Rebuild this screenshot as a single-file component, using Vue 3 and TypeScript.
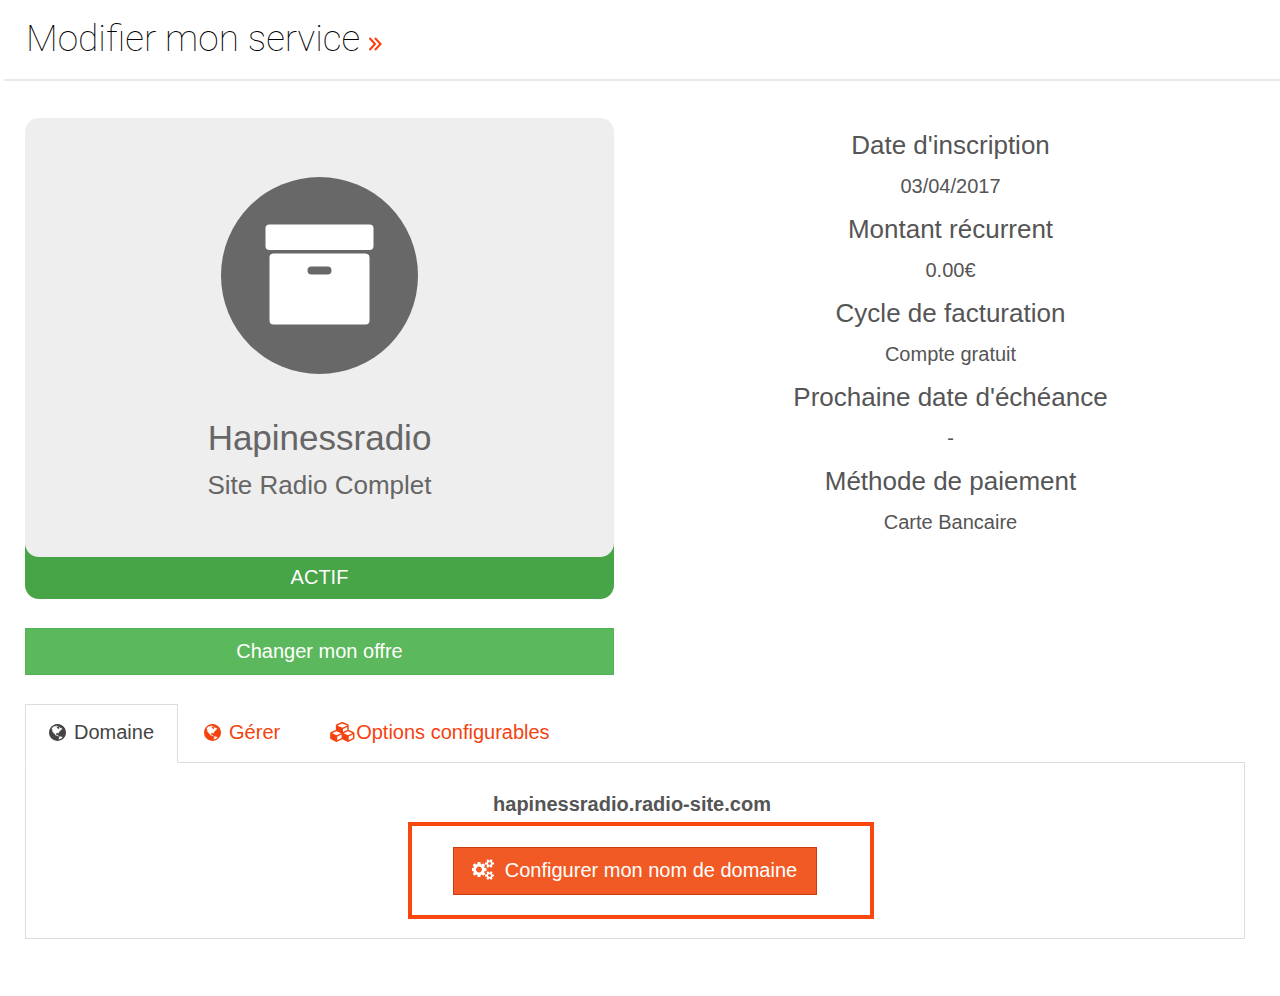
<script setup lang="ts">
import { ref } from 'vue'

interface Detail {
  label: string
  value: string
}

interface Tab {
  id: string
  label: string
  icon: 'globe' | 'cubes'
}

const details: Detail[] = [
  { label: "Date d'inscription", value: '03/04/2017' },
  { label: 'Montant récurrent', value: '0.00€' },
  { label: 'Cycle de facturation', value: 'Compte gratuit' },
  { label: "Prochaine date d'échéance", value: '-' },
  { label: 'Méthode de paiement', value: 'Carte Bancaire' },
]

const tabs: Tab[] = [
  { id: 'domaine', label: 'Domaine', icon: 'globe' },
  { id: 'gerer', label: 'Gérer', icon: 'globe' },
  { id: 'options', label: 'Options configurables', icon: 'cubes' },
]

const active = ref('domaine')

const icons = {
  globe: {
    box: '128 128 1536 1536',
    path: 'M896 128q209 0 385.500 103t279.500 279.500 103 385.500-103 385.500-279.500 279.500-385.500 103-385.500-103-279.500-279.500-103-385.500 103-385.500 279.500-279.500 385.500-103zm274 521q-2 1-9.500 9.500t-13.500 9.500q2 0 4.500-5t5-11 3.500-7q6-7 22-15 14-6 52-12 34-8 51 11-2-2 9.500-13t14.500-12q3-2 15-4.500t15-7.500l2-22q-12 1-17.500-7t-6.500-21q0 2-6 8 0-7-4.500-8t-11.500 1-9 1q-10-3-15-7.500t-8-16.500-4-15q-2-5-9.500-11t-9.500-10q-1-2-2.500-5.500t-3-6.500-4-5.500-5.500-2.500-7 5-7.500 10-4.500 5q-3-2-6-1.500t-4.500 1-4.500 3-5 3.500q-3 2-8.500 3t-8.500 2q15-5-1-11-10-4-16-3 9-4 7.500-12t-8.500-14h5q-1-4-8.500-8.500t-17.500-8.500-13-6q-8-5-34-9.500t-33-.5q-5 6-4.500 10.500t4 14 3.500 12.500q1 6-5.500 13t-6.500 12q0 7 14 15.500t10 21.500q-3 8-16 16t-16 12q-5 8-1.500 18.500t10.500 16.500q2 2 1.500 4t-3.500 4.500-5.500 4-6.500 3.500l-3 2q-11 5-20.500-6t-13.500-26q-7-25-16-30-23-8-29 1-5-13-41-26-25-9-58-4 6-1 0-15-7-15-19-12 3-6 4-17.500t1-13.500q3-13 12-23 1-1 7-8.500t9.500-13.500.500-6q35 4 50-11 5-5 11.500-17t10.500-17q9-6 14-5.500t14.500 5.500 14.500 5q14 1 15.500-11t-7.500-20q12 1 3-17-4-7-8-9-12-4-27 5-8 4 2 8-1-1-9.500 10.500t-16.500 17.500-16-5q-1-1-5.500-13.500t-9.500-13.500q-8 0-16 15 3-8-11-15t-24-8q19-12-8-27-7-4-20.500-5t-19.500 4q-5 7-5.500 11.500t5 8 10.500 5.500 11.500 4 8.500 3q14 10 8 14-2 1-8.500 3.500t-11.500 4.500-6 4q-3 4 0 14t-2 14q-5-5-9-17.500t-7-16.500q7 9-25 6l-10-1q-4 0-16 2t-20.500 1-13.500-8q-4-8 0-20 1-4 4-2-4-3-11-9.500t-10-8.500q-46 15-94 41 6 1 12-1 5-2 13-6.500t10-5.500q34-14 42-7l5-5q14 16 20 25-7-4-30-1-20 6-22 12 7 12 5 18-4-3-11.500-10t-14.500-11-15-5q-16 0-22 1-146 80-235 222 7 7 12 8 4 1 5 9t2.500 11 11.500-3q9 8 3 19 1-1 44 27 19 17 21 21 3 11-10 18-1-2-9-9t-9-4q-3 5 .5 18.500t10.500 12.500q-7 0-9.500 16t-2.500 35.500-1 23.500l2 1q-3 12 5.500 34.500t21.500 19.500q-13 3 20 43 6 8 8 9 3 2 12 7.500t15 10 10 10.500q4 5 10 22.500t14 23.500q-2 6 9.500 20t10.500 23q-1 0-2.500 1t-2.500 1q3 7 15.500 14t15.500 13q1 3 2 10t3 11 8 2q2-20-24-62-15-25-17-29-3-5-5.500-15.500t-4.500-14.500q2 0 6 1.500t8.500 3.500 7.500 4 2 3q-3 7 2 17.500t12 18.500 17 19 12 13q6 6 14 19.500t0 13.500q9 0 20 10t17 20q5 8 8 26t5 24q2 7 8.500 13.500t12.500 9.500l16 8 13 7q5 2 18.500 10.500t21.500 11.500q10 4 16 4t14.500-2.500 13.500-3.500q15-2 29 15t21 21q36 19 55 11-2 1 .5 7.500t8 15.500 9 14.500 5.500 8.500q5 6 18 15t18 15q6-4 7-9-3 8 7 20t18 10q14-3 14-32-31 15-49-18 0-1-2.500-5.500t-4-8.500-2.500-8.500 0-7.500 5-3q9 0 10-3.500t-2-12.500-4-13q-1-8-11-20t-12-15q-5 9-16 8t-16-9q0 1-1.500 5.500t-1.500 6.500q-13 0-15-1 1-3 2.500-17.500t3.500-22.500q1-4 5.500-12t7.500-14.500 4-12.500-4.500-9.500-17.500-2.500q-19 1-26 20-1 3-3 10.500t-5 11.500-9 7q-7 3-24 2t-24-5q-13-8-22.500-29t-9.500-37q0-10 2.500-26.500t3-25-5.500-24.500q3-2 9-9.500t10-10.500q2-1 4.500-1.500t4.500 0 4-1.500 3-6q-1-1-4-3-3-3-4-3 7 3 28.500-1.500t27.500 1.500q15 11 22-2 0-1-2.500-9.500t-.5-13.500q5 27 29 9 3 3 15.500 5t17.500 5q3 2 7 5.500t5.500 4.500 5-.5 8.500-6.500q10 14 12 24 11 40 19 44 7 3 11 2t4.500-9.500 0-14-1.500-12.500l-1-8v-18l-1-8q-15-3-18.500-12t1.500-18.500 15-18.500q1-1 8-3.500t15.500-6.500 12.500-8q21-19 15-35 7 0 11-9-1 0-5-3t-7.500-5-4.500-2q9-5 2-16 5-3 7.500-11t7.500-10q9 12 21 2 7-8 1-16 5-7 20.500-10.500t18.500-9.500q7 2 8-2t1-12 3-12q4-5 15-9t13-5l17-11q3-4 0-4 18 2 31-11 10-11-6-20 3-6-3-9.500t-15-5.500q3-1 11.500-.5t10.500-1.500q15-10-7-16-17-5-43 12zm-163 877q206-36 351-189-3-3-12.500-4.500t-12.500-3.500q-18-7-24-8 1-7-2.500-13t-8-9-12.500-8-11-7q-2-2-7-6t-7-5.500-7.500-4.500-8.500-2-10 1l-3 1q-3 1-5.500 2.500t-5.500 3-4 3 0 2.500q-21-17-36-22-5-1-11-5.500t-10.500-7-10-1.500-11.500 7q-5 5-6 15t-2 13q-7-5 0-17.500t2-18.500q-3-6-10.500-4.500t-12 4.500-11.500 8.500-9 6.500-8.500 5.500-8.500 7.500q-3 4-6 12t-5 11q-2-4-11.500-6.500t-9.500-5.500q2 10 4 35t5 38q7 31-12 48-27 25-29 40-4 22 12 26 0 7-8 20.500t-7 21.500q0 6 2 16z',
  },
  cubes: {
    box: '0 0 2304 1792',
    path: 'M640 1632l384-192v-314l-384 164v342zm-64-454l404-173-404-173-404 173zm1088 454l384-192v-314l-384 164v342zm-64-454l404-173-404-173-404 173zm-448-293l384-165v-266l-384 164v267zm-64-379l441-189-441-189-441 189zm1088 518v416q0 36-19 67t-52 47l-448 224q-25 14-57 14t-57-14l-448-224q-4-2-7-4-2 2-7 4l-448 224q-25 14-57 14t-57-14l-448-224q-33-16-52-47t-19-67v-416q0-38 21.500-70t56.500-48l434-186v-400q0-38 21.500-70t56.500-48l448-192q23-10 50-10t50 10l448 192q35 16 56.500 48t21.500 70v400l434 186q36 16 57 48t21 70z',
  },
}
</script>

<template>
  <main class="page">
    <header class="page-header">
      <h1>Modifier mon service</h1>
      <svg class="chevrons" viewBox="0 0 14 14" aria-hidden="true">
        <path d="M1.500 1L7 7L1.500 13M7 1L12.500 7L7 13" />
      </svg>
    </header>

    <div class="content">
      <div class="summary">
        <section class="service">
          <div class="status-card">
            <div class="product">
              <svg class="product-icon" viewBox="0 0 198 198" aria-hidden="true">
                <circle cx="98.500" cy="98.500" r="98.500" fill="#686868" />
                <rect x="44.500" y="47.500" width="108" height="25.500" rx="4" fill="#fff" />
                <rect x="48.500" y="76.500" width="100" height="71" rx="4" fill="#fff" />
                <rect x="86.500" y="89.500" width="24" height="8" rx="4" fill="#686868" />
              </svg>
              <h2>Hapinessradio</h2>
              <h3>Site Radio Complet</h3>
            </div>
            <div class="status">ACTIF</div>
          </div>
          <button type="button" class="upgrade">Changer mon offre</button>
        </section>

        <dl class="details">
          <template v-for="d in details" :key="d.label">
            <dt>{{ d.label }}</dt>
            <dd>{{ d.value }}</dd>
          </template>
        </dl>
      </div>

      <div class="tabs" role="tablist">
        <button
          v-for="t in tabs"
          :id="'tab-' + t.id"
          :key="t.id"
          type="button"
          role="tab"
          class="tab"
          :class="[t.icon, { active: active === t.id }]"
          :aria-selected="active === t.id"
          aria-controls="panel"
          @click="active = t.id"
        >
          <svg :viewBox="icons[t.icon].box" aria-hidden="true">
            <path :d="icons[t.icon].path" fill="currentColor" />
          </svg>
          <span>{{ t.label }}</span>
        </button>
      </div>

      <section id="panel" class="panel" role="tabpanel" :aria-labelledby="'tab-' + active">
        <strong class="domain">hapinessradio.radio-site.com</strong>
        <div class="action">
          <button type="button" class="configure">
            <svg viewBox="0 0 1920 1792" aria-hidden="true">
              <path
                fill="currentColor"
                d="M832 896q0-106-75-181t-181-75-181 75-75 181 75 181 181 75 181-75 75-181zm768 512q0-52-38-90t-90-38-90 38-38 90q0 53 37.500 90.500t90.500 37.500 90.500-37.500 37.500-90.500zm0-1024q0-52-38-90t-90-38-90 38-38 90q0 53 37.500 90.500t90.500 37.500 90.500-37.500 37.500-90.500zm-384 421v185q0 10-7 19.500t-16 10.500l-155 24q-11 35-32 76 34 48 90 115 7 11 7 20 0 12-7 19-23 30-82.500 89.500t-78.500 59.500q-11 0-21-7l-115-90q-37 19-77 31-11 108-23 155-7 24-30 24h-186q-11 0-20-7.500t-10-17.500l-23-153q-34-10-75-31l-118 89q-7 7-20 7-11 0-21-8-144-133-144-160 0-9 7-19 10-14 41-53t47-61q-23-44-35-82l-152-24q-10-1-17-9.500t-7-19.500v-185q0-10 7-19.500t16-10.500l155-24q11-35 32-76-34-48-90-115-7-11-7-20 0-12 7-20 22-30 82-89t79-59q11 0 21 7l115 90q34-18 77-32 11-108 23-154 7-24 30-24h186q11 0 20 7.500t10 17.500l23 153q34 10 75 31l118-89q8-7 20-7 11 0 21 8 144 133 144 160 0 8-7 19-12 16-42 54t-45 60q23 48 34 82l152 23q10 2 17 10.500t7 19.500zm640 533v140q0 16-149 31-12 27-30 52 51 113 51 138 0 4-4 7-122 71-124 71-8 0-46-47t-52-68q-20 2-30 2t-30-2q-14 21-52 68t-46 47q-2 0-124-71-4-3-4-7 0-25 51-138-18-25-30-52-149-15-149-31v-140q0-16 149-31 13-29 30-52-51-113-51-138 0-4 4-7 4-2 35-20t59-34 30-16q8 0 46 46.500t52 67.500q20-2 30-2t30 2q51-71 92-112l6-2q4 0 124 70 4 3 4 7 0 25-51 138 17 23 30 52 149 15 149 31zm0-1024v140q0 16-149 31-12 27-30 52 51 113 51 138 0 4-4 7-122 71-124 71-8 0-46-47t-52-68q-20 2-30 2t-30-2q-14 21-52 68t-46 47q-2 0-124-71-4-3-4-7 0-25 51-138-18-25-30-52-149-15-149-31v-140q0-16 149-31 13-29 30-52-51-113-51-138 0-4 4-7 4-2 35-20t59-34 30-16q8 0 46 46.500t52 67.500q20-2 30-2t30 2q51-71 92-112l6-2q4 0 124 70 4 3 4 7 0 25-51 138 17 23 30 52 149 15 149 31z"
              />
            </svg>
            <span>Configurer mon nom de domaine</span>
          </button>
          <span class="highlight" aria-hidden="true"></span>
        </div>
      </section>
    </div>
  </main>
</template>

<style>
body {
  margin: 0;
  background: #fff;
}
</style>

<style scoped>
.page {
  font-family: 'Liberation Sans', Arial, Helvetica, sans-serif;
  font-size: 20px;
  line-height: 28px;
  color: #555;
}

.page-header {
  display: flex;
  align-items: center;
  gap: 8px;
  margin-left: 4px;
  padding: 15px 22px 16px;
  border-bottom: 2px solid #e9e9e9;
}

h1 {
  margin: 0;
  font-family: Roboto, sans-serif;
  font-size: 37px;
  line-height: 48px;
  font-weight: 100;
  color: #000;
}

.chevrons {
  width: 14px;
  height: 14px;
  margin-top: 10px;
  fill: none;
  stroke: #fa3c0a;
  stroke-width: 2;
}

.content {
  padding: 37px 35px 56px 25px;
}

.summary {
  display: grid;
  grid-template-columns: 1fr 1fr;
  gap: 42px;
}

.service {
  display: flex;
  flex-direction: column;
  gap: 29px;
}

.status-card {
  text-align: center;
}

.product {
  position: relative;
  z-index: 1;
  display: flex;
  flex-direction: column;
  align-items: center;
  padding: 59px 20px 54px;
  border-radius: 14px;
  background: #eee;
}

.product-icon {
  width: 198px;
  height: 198px;
  margin-bottom: 41px;
}

h2,
h3 {
  margin: 0;
  font-weight: 400;
}

h2 {
  font-size: 35px;
  line-height: 44px;
  color: #666;
}

h3 {
  margin-top: 7px;
  font-size: 26px;
  line-height: 36px;
  color: #666;
}

.status {
  margin-top: -14px;
  padding: 20px 0 8px;
  border-radius: 0 0 14px 14px;
  background: #47a447;
  color: #fff;
}

button {
  font: inherit;
  border-radius: 0;
  cursor: pointer;
}

.upgrade {
  height: 47px;
  padding: 0 0 2px;
  border: 1px solid #53b253;
  background: #5cb85c;
  color: #fff;
}

.details {
  margin: 0;
  padding-top: 9px;
  text-align: center;
}

dt {
  font-size: 26px;
  line-height: 36px;
}

dd {
  margin: 0;
  padding: 9px 0 11px;
}

.tabs {
  display: flex;
  margin-top: 29px;
}

.tab {
  display: flex;
  align-items: center;
  gap: 8px;
  height: 59px;
  margin-bottom: -1px;
  padding: 0 23px 3px;
  border: 1px solid transparent;
  background: transparent;
  color: #f4430f;
}

.tab + .tab {
  margin-left: 2px;
}

.tab.active {
  border-color: #ddd;
  border-bottom-color: #fff;
  background: #fff;
  color: #444;
}

.tab svg {
  width: 17px;
  height: 17px;
}

.tab.cubes {
  gap: 0;
}

.tab.cubes svg {
  width: 26px;
  height: 20px;
}

.panel {
  display: flex;
  flex-direction: column;
  align-items: center;
  padding: 27px 0 43px;
  border: 1px solid #ddd;
}

.domain {
  padding-right: 6px;
}

.action {
  position: relative;
  margin-top: 29px;
}

.configure {
  display: flex;
  align-items: center;
  gap: 10px;
  height: 48px;
  padding: 0 19px 3px 18px;
  border: 1px solid #c93a10;
  background: #f15a24;
  color: #fff;
}

.configure svg {
  width: 23px;
  height: 21px;
}

.highlight {
  position: absolute;
  inset: -25px -57px -24px -45px;
  border: 4px solid #f9480f;
  pointer-events: none;
}
</style>
